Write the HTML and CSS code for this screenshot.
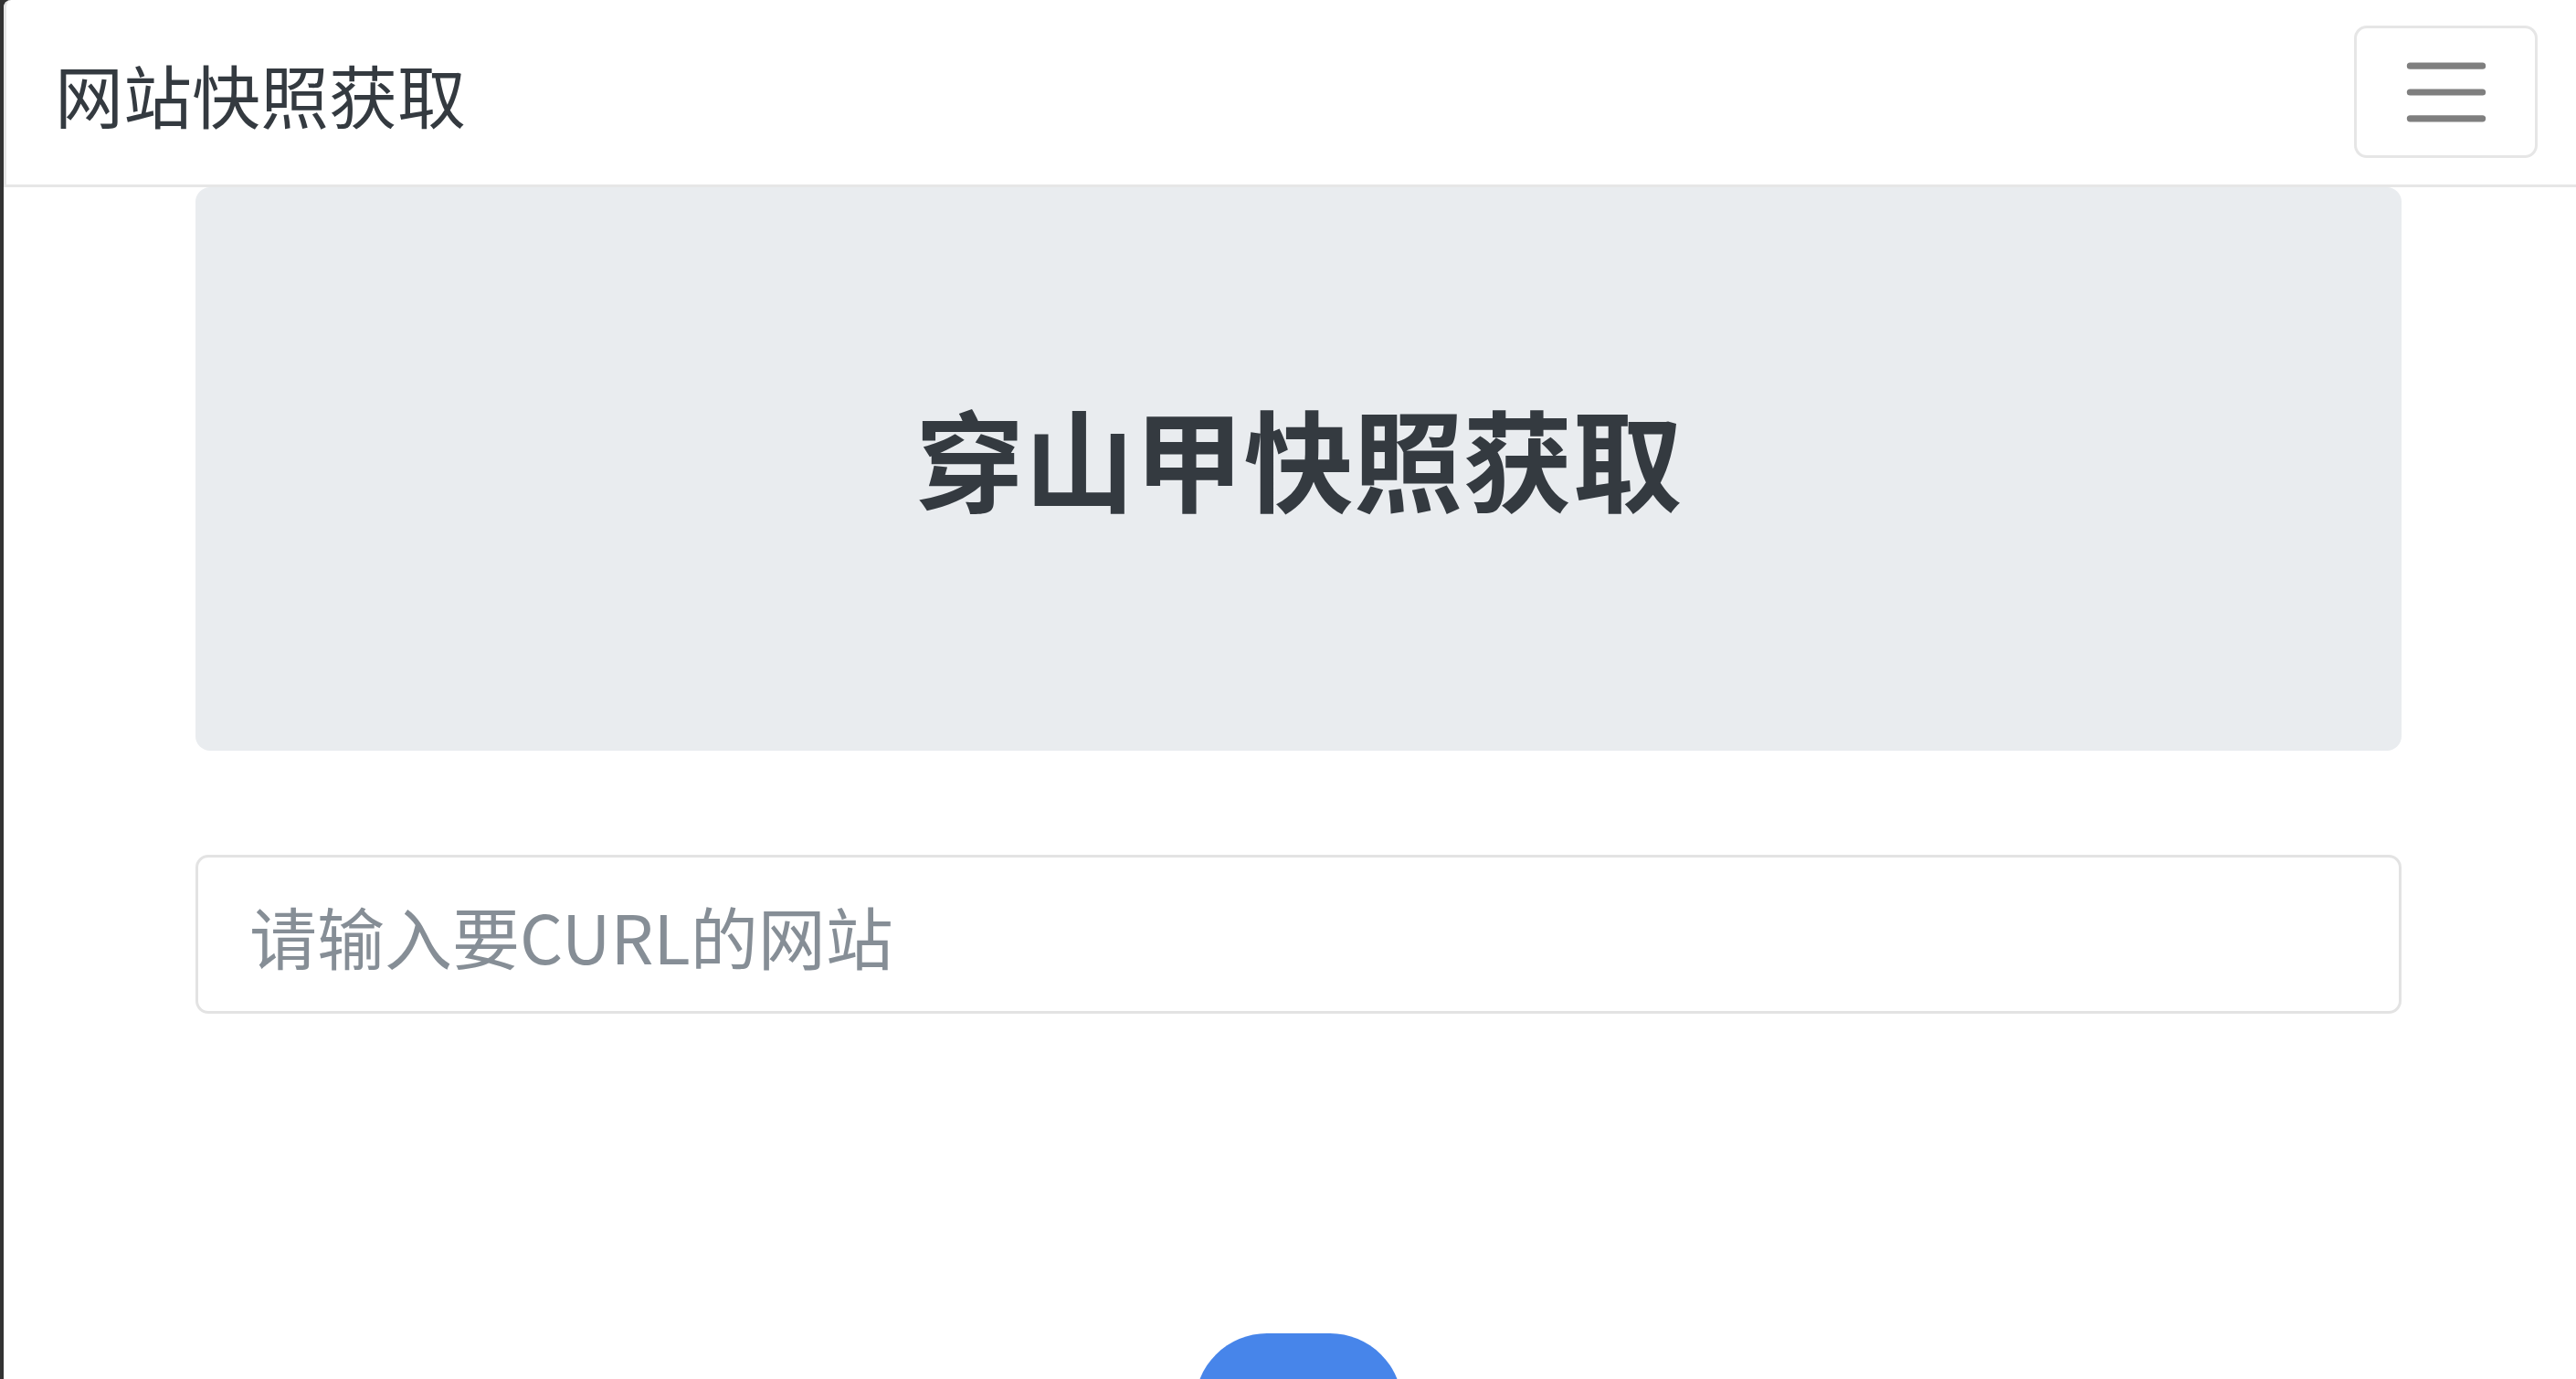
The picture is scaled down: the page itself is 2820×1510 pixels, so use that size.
FILE: index.html
```html
<!DOCTYPE html>
<html>
<head>
    <meta charset="utf-8">
    <title>网站快照获取</title>
    <link rel="stylesheet" href="styles.css">
</head>
<body>
    <div class="page">
        <nav class="navbar">
            <a class="brand" href="#">网站快照获取</a>
            <button type="button" class="toggler">
                <svg class="toggler-icon" viewBox="0 0 30 30" width="108" height="108">
                    <path d="M4 7h22M4 15h22M4 23h22" stroke="rgba(0,0,0,0.5)" stroke-width="2" stroke-linecap="round" fill="none"/>
                </svg>
            </button>
        </nav>

        <div class="main">
            <div class="jumbotron">
                <h1>穿山甲快照获取</h1>
            </div>
            <form class="curl-form" onsubmit="return false">
                <input type="text" class="url-input" placeholder="请输入要CURL的网站">
                <div class="actions">
                    <button type="submit" class="btn-go">前进</button>
                </div>
            </form>
        </div>
    </div>
</body>
</html>
```

FILE: styles.css
```css
body {
    margin: 0;
    padding: 0;
    background: #333;
    font-family: "Noto Sans CJK SC", "Noto Sans", sans-serif;
    color: #343a40;
}

.page {
    margin-left: 4px;
    min-height: 100vh;
    background: #fff;
    border-top-left-radius: 8px;
    overflow: hidden;
}

.navbar {
    display: flex;
    align-items: center;
    justify-content: space-between;
    padding: 28px 42px 29px 53px;
    border-left: 3px solid #e6e6e6;
    border-bottom: 3px solid #e6e6e6;
    border-top-left-radius: 8px;
}

.brand {
    font-size: 75px;
    line-height: 108px;
    padding: 20px 0 16px;
    color: #343a40;
    text-decoration: none;
}

.toggler {
    display: flex;
    align-items: center;
    justify-content: center;
    width: 201px;
    height: 145px;
    padding: 0;
    background: #fff;
    border: 3px solid #e6e6e6;
    border-radius: 14px;
    cursor: pointer;
}

.toggler-icon {
    display: block;
}

.main {
    width: 2415px;
    margin-left: 210px;
}

.jumbotron {
    background: #e9ecef;
    border-radius: 16px;
    padding: 223px 0 221px;
    margin-bottom: 114px;
    text-align: center;
}

.jumbotron h1 {
    margin: 0 0 29px;
    font-size: 120px;
    line-height: 144px;
    font-weight: 700;
    color: #343a40;
}

.url-input {
    display: block;
    width: 100%;
    height: 174px;
    box-sizing: border-box;
    padding: 0 56px;
    font-family: "Noto Sans CJK SC", "Noto Sans", sans-serif;
    font-size: 74px;
    color: #495057;
    border: 3px solid #e3e3e3;
    border-radius: 14px;
    outline: none;
}

.url-input::placeholder {
    color: #868e96;
}

.actions {
    display: flex;
    justify-content: center;
    margin-top: 350px;
}

.btn-go {
    width: 227px;
    height: 158px;
    border: 0;
    border-radius: 80px;
    background: #4785ea;
    color: #fff;
    font-family: "Noto Sans CJK SC", "Noto Sans", sans-serif;
    font-size: 72px;
    cursor: pointer;
}
```
